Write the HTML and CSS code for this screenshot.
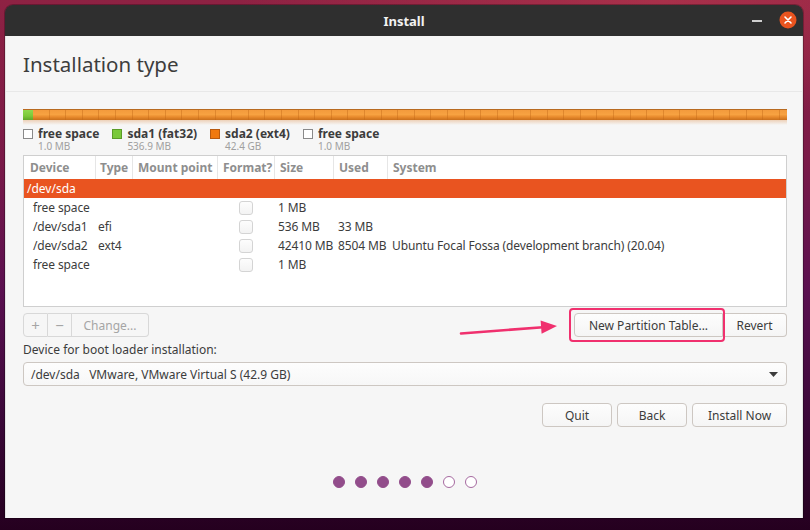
FILE: index.html
```html
<!DOCTYPE html>
<html>
<head>
<meta charset="utf-8">
<title>Install</title>
<link rel="stylesheet" href="styles.css">
</head>
<body>
<div class="desktop">
  <div class="window">
    <div class="titlebar">
      <span class="title">Install</span>
      <div class="wm-buttons">
        <span class="wm-min"></span>
        <svg class="wm-close" width="18" height="18" viewBox="0 0 18 18"><circle cx="9" cy="9" r="8.5" fill="#e9541f"/><path d="M6 6l6 6M12 6l-6 6" stroke="#fff" stroke-width="1.6" stroke-linecap="round"/></svg>
      </div>
    </div>
    <div class="content">
      <div class="header"><h1>Installation type</h1></div>
      <div class="main">
        <div class="pbar">
          <div class="pseg pseg-fat"></div>
          <div class="pseg pseg-ext4"></div>
        </div>
        <div class="pbar-shadow"></div>
        <div class="legend">
          <div class="litem">
            <span class="swatch sw-free"></span>
            <div class="ltext"><div class="lname">free space</div><div class="lsize">1.0 MB</div></div>
          </div>
          <div class="litem">
            <span class="swatch sw-fat"></span>
            <div class="ltext"><div class="lname">sda1 (fat32)</div><div class="lsize">536.9 MB</div></div>
          </div>
          <div class="litem">
            <span class="swatch sw-ext4"></span>
            <div class="ltext"><div class="lname">sda2 (ext4)</div><div class="lsize">42.4 GB</div></div>
          </div>
          <div class="litem">
            <span class="swatch sw-free"></span>
            <div class="ltext"><div class="lname">free space</div><div class="lsize">1.0 MB</div></div>
          </div>
        </div>

        <div class="ptable">
          <div class="trow thead">
            <div class="tc">Device</div><div class="tc">Type</div><div class="tc">Mount point</div><div class="tc">Format?</div><div class="tc">Size</div><div class="tc">Used</div><div class="tc">System</div>
          </div>
          <div class="trow disk"><div class="tc">/dev/sda</div></div>
          <div class="trow part">
            <div class="tc">free space</div><div class="tc"></div><div class="tc"></div><div class="tc chk"><span class="cbox"></span></div><div class="tc">1 MB</div><div class="tc"></div><div class="tc"></div>
          </div>
          <div class="trow part">
            <div class="tc">/dev/sda1</div><div class="tc">efi</div><div class="tc"></div><div class="tc chk"><span class="cbox"></span></div><div class="tc">536 MB</div><div class="tc">33 MB</div><div class="tc"></div>
          </div>
          <div class="trow part">
            <div class="tc">/dev/sda2</div><div class="tc">ext4</div><div class="tc"></div><div class="tc chk"><span class="cbox"></span></div><div class="tc">42410 MB</div><div class="tc">8504 MB</div><div class="tc">Ubuntu Focal Fossa (development branch) (20.04)</div>
          </div>
          <div class="trow part">
            <div class="tc">free space</div><div class="tc"></div><div class="tc"></div><div class="tc chk"><span class="cbox"></span></div><div class="tc">1 MB</div><div class="tc"></div><div class="tc"></div>
          </div>
        </div>

        <div class="actions">
          <div class="bgroup disabled">
            <span class="gbtn gplus">+</span><span class="gbtn gminus">&minus;</span><span class="gbtn gchange">Change...</span>
          </div>
          <div class="bgroup right">
            <span class="gbtn gnew">New Partition Table...</span><span class="gbtn grevert">Revert</span>
          </div>
          <svg class="annot-arrow" width="110" height="24" viewBox="0 0 110 24"><path d="M2 16.5 L84 10.2" stroke="#f0306e" stroke-width="2.6" stroke-linecap="round"/><path d="M98 9 L82.6 16.8 L81.6 3.6 Z" fill="#f0306e"/></svg>
          <div class="annot-box"></div>
        </div>

        <div class="boot-label">Device for boot loader installation:</div>
        <div class="select">
          <span class="sel-text">/dev/sda&nbsp;&nbsp;&nbsp;VMware, VMware Virtual S (42.9 GB)</span>
          <svg class="sel-arrow" width="9" height="5" viewBox="0 0 9 5"><path d="M0 0h9L4.5 5z" fill="#3c3c3c"/></svg>
        </div>

        <div class="nav">
          <span class="btn b-quit">Quit</span>
          <span class="btn b-back">Back</span>
          <span class="btn b-install">Install Now</span>
        </div>

        <div class="dots">
          <span class="dot on"></span><span class="dot on"></span><span class="dot on"></span><span class="dot on"></span><span class="dot on"></span><span class="dot"></span><span class="dot"></span>
        </div>
      </div>
    </div>
  </div>
</div>
</body>
</html>
```

FILE: styles.css
```css
* { box-sizing: border-box; }
html, body { margin: 0; padding: 0; }
body {
  width: 810px;
  height: 530px;
  overflow: hidden;
  font-family: "Noto Sans", "Open Sans", sans-serif;
  font-size: 12px;
  color: #3c3c3c;
}
.desktop {
  width: 810px;
  height: 530px;
  padding: 5px 7px 0 5px;
  background:
    radial-gradient(ellipse 420px 120px at 660px 0px, rgba(190,60,80,0.55), rgba(190,60,80,0) 100%),
    linear-gradient(180deg, #8e2243 0%, #7a1a48 30%, #5a1050 55%, #3a0838 80%, #25001f 100%);
}
.window {
  height: 513px;
  display: flex;
  flex-direction: column;
  border-radius: 8px 8px 0 0;
  overflow: hidden;
  box-shadow: 0 0 0 1px rgba(0,0,0,0.25);
}
.titlebar {
  height: 31px;
  flex: 0 0 31px;
  background: #2f2f2f;
  display: flex;
  align-items: center;
  justify-content: center;
  position: relative;
}
.title {
  color: #f2f2f2;
  font-weight: bold;
  font-size: 13px;
}
.wm-buttons {
  position: absolute;
  right: 6px;
  top: 6px;
  display: flex;
  align-items: center;
  gap: 17px;
}
.wm-min {
  width: 10px;
  height: 2px;
  background: #cfcfcf;
  margin-top: 2px;
}
.wm-close { display: block; }
.content {
  flex: 1;
  background: #f6f6f6;
  display: flex;
  flex-direction: column;
  border-left: 1px solid #e2e2e2;
  border-right: 1px solid #e2e2e2;
}
.header {
  height: 56px;
  border-bottom: 1px solid #e8e8e8;
  display: flex;
  align-items: center;
  padding-left: 17px;
}
.header h1 {
  margin: 0;
  font-weight: normal;
  font-size: 20.5px;
  color: #3d3d3d;
}
.main {
  padding: 17px 15px 0 17px;
  display: flex;
  flex-direction: column;
}
.pbar {
  height: 11px;
  display: flex;
  border-top: 1px solid #b86a20;
}
.pseg-fat {
  flex: 0 0 10px;
  background: linear-gradient(180deg, #8fd94c 0%, #7cc83a 60%, #5fa528 100%);
}
.pseg-ext4 {
  flex: 1;
  background:
    repeating-linear-gradient(90deg, transparent 0, transparent 15.6px, rgba(190,100,20,0.4) 15.6px, rgba(190,100,20,0.4) 16.6px),
    linear-gradient(180deg, #f39a3c 0%, #f7a241 45%, #e88a2c 70%, #c9701c 100%);
}
.pbar-shadow {
  height: 5px;
  background: linear-gradient(180deg, rgba(220,140,70,0.35), rgba(246,246,246,0));
}
.legend {
  display: flex;
  margin-top: 2px;
  height: 25px;
}
.litem {
  display: flex;
  gap: 5px;
  margin-right: 13px;
}
.swatch {
  width: 10px;
  height: 10px;
  margin-top: 2px;
  border: 1px solid #7a7a7a;
}
.sw-free { background: #fff; border-color: #8a8a8a; }
.sw-fat { background: #7ac93a; border-color: #5c9c28; }
.sw-ext4 { background: #f0790f; border-color: #b85a10; }
.lname {
  font-weight: bold;
  line-height: 13px;
  color: #3c3c3c;
}
.lsize {
  font-size: 10px;
  line-height: 12px;
  color: #a0a0a0;
}
.ptable {
  margin-top: 3px;
  height: 152px;
  background: #fff;
  border: 1px solid #cfcfcf;
}
.trow {
  display: grid;
  grid-template-columns: 71px 37px 85px 57px 59px 54px 1fr;
  height: 19px;
  align-items: center;
  white-space: nowrap;
}
.thead {
  height: 23px;
  align-items: stretch;
  background: #fff;
}
.thead .tc {
  display: flex;
  align-items: center;
  font-weight: bold;
  color: #8e8e8e;
  padding-left: 5px;
  border-left: 1px solid #e6e6e6;
}
.thead .tc:first-child { padding-left: 6px; border-left: none; }
.thead .tc:nth-child(2) { padding-left: 4px; }
.disk {
  display: flex;
  background: #e95420;
  color: #fff;
  padding-left: 3px;
}
.part { letter-spacing: -0.12px; }
.part .tc { padding-left: 4px; }
.part .tc:first-child { padding-left: 9px; }
.part .tc:nth-child(2) { padding-left: 3px; }
.part .tc:nth-child(6), .part .tc:nth-child(7) { padding-left: 5px; }
.part .chk {
  display: flex;
  justify-content: center;
  padding-left: 0;
}
.cbox {
  width: 14px;
  height: 14px;
  border: 1px solid #d4d4d4;
  border-radius: 3px;
  background: linear-gradient(180deg, #fdfdfd, #f3f3f3);
}
.actions {
  position: relative;
  margin-top: 6px;
  height: 24px;
  display: flex;
  justify-content: space-between;
}
.bgroup {
  display: flex;
  height: 24px;
}
.gbtn {
  display: flex;
  align-items: center;
  justify-content: center;
  height: 24px;
  border: 1px solid #cdc7c2;
  border-left-width: 0;
  background: linear-gradient(180deg, #fdfdfd, #f5f5f5);
  color: #3c3c3c;
}
.gbtn:first-child { border-left-width: 1px; border-radius: 4px 0 0 4px; }
.gbtn:last-child { border-radius: 0 4px 4px 0; }
.disabled .gbtn {
  background: #f6f6f6;
  border-color: #d8d8d8;
  color: #a5a5a5;
}
.gplus { width: 25px; font-size: 15px; }
.gminus { width: 24px; font-size: 15px; }
.gchange { width: 77px; }
.gnew { width: 149px; }
.grevert { width: 64px; }
.annot-arrow {
  position: absolute;
  left: 436px;
  top: 4px;
}
.annot-box {
  position: absolute;
  left: 546px;
  top: -5px;
  width: 156px;
  height: 34px;
  border: 2px solid #f0306e;
  border-radius: 4px;
}
.boot-label {
  margin-top: 6px;
  line-height: 14px;
}
.select {
  margin-top: 5px;
  height: 24px;
  border: 1px solid #cdc7c2;
  border-radius: 4px;
  background: linear-gradient(180deg, #fdfdfd, #f7f7f7);
  display: flex;
  align-items: center;
  justify-content: space-between;
  padding: 0 8px 0 7px;
}
.sel-text { white-space: pre; }
.nav {
  margin-top: 17px;
  display: flex;
  justify-content: flex-end;
  gap: 5px;
}
.btn {
  height: 24px;
  display: flex;
  align-items: center;
  justify-content: center;
  border: 1px solid #cdc7c2;
  border-radius: 4px;
  background: linear-gradient(180deg, #fdfdfd, #f5f5f5);
  color: #3c3c3c;
}
.b-quit { width: 70px; }
.b-back { width: 70px; }
.b-install { width: 95px; }
.dots {
  margin-top: 49px;
  display: flex;
  justify-content: center;
  gap: 10px;
}
.dot {
  width: 12px;
  height: 12px;
  border-radius: 50%;
  background: #fff;
  border: 1px solid #a66aa0;
}
.dot.on {
  background: #924d8b;
  border-color: #924d8b;
}
```
